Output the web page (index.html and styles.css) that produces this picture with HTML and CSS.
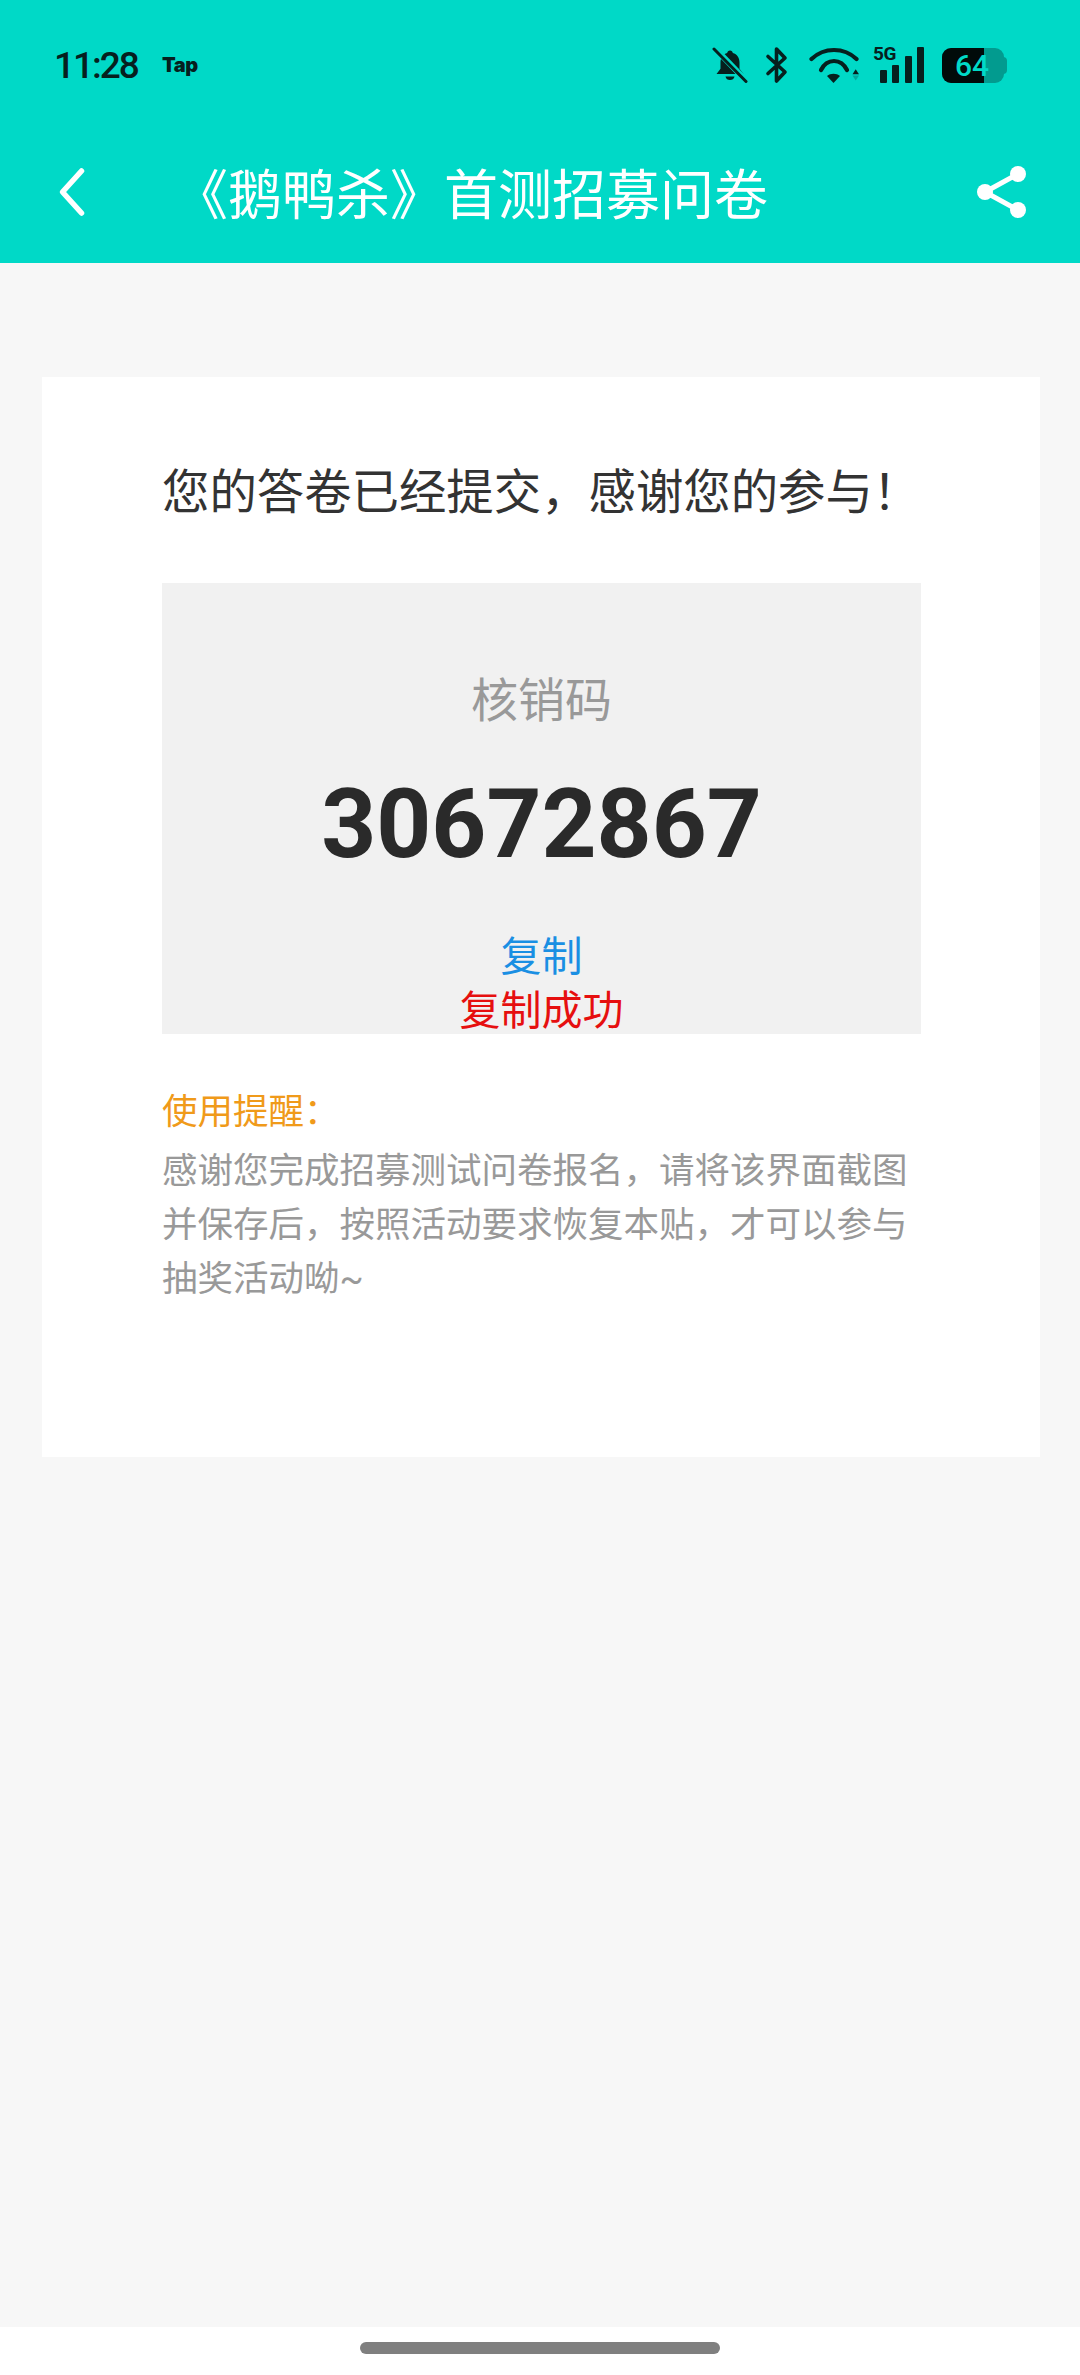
FILE: index.html
```html
<!DOCTYPE html>
<html lang="zh-CN">
<head>
    <meta charset="UTF-8">
    <meta name="viewport" content="width=device-width, initial-scale=1.0">
    <title>《鹅鸭杀》首测招募问卷</title>
    <link rel="stylesheet" href="styles.css">
</head>
<body>
    <div class="page">
        <header class="top">
            <div class="status-bar">
                <div class="status-left">
                    <span class="clock">11:28</span>
                    <span class="tap-logo">Tap</span>
                </div>
                <div class="status-right">
                    <!-- bell off -->
                    <svg class="ico-bell" viewBox="0 0 36 36" width="36" height="36">
                        <path d="M18 3.5c1.6 0 2.6 1 2.8 2.4 4.400 1.200 6.700 4.800 6.700 9.600v6.200l4 5.300H4.500l4-5.300v-6.200c0-4.800 2.600-8.400 6.700-9.600C15.400 4.500 16.400 3.500 18 3.500z" fill="#06201e"/>
                        <path d="M13.500 29.500h9c-.4 2.300-2.200 3.600-4.500 3.600s-4.100-1.300-4.500-3.600z" fill="#06201e"/>
                        <path d="M3 1.500 34.500 34" stroke="#00d9c7" stroke-width="6"/>
                        <path d="M2 2 34 34.500" stroke="#06201e" stroke-width="3" stroke-linecap="round"/>
                    </svg>
                    <!-- bluetooth -->
                    <svg class="ico-bt" viewBox="0 0 24 38" width="24" height="38">
                        <path d="M3 10.500 20 26 11.500 35V3L20 12 3 27.500" fill="none" stroke="#06201e" stroke-width="3.600" stroke-linejoin="round" stroke-linecap="round"/>
                    </svg>
                    <!-- wifi -->
                    <svg class="ico-wifi" viewBox="0 0 50 36" width="50" height="36">
                        <path d="M2.500 12C15 0 35 0 47.500 12" fill="none" stroke="#06201e" stroke-width="4.200" stroke-linecap="round"/>
                        <path d="M12 23C18 11 32 11 38 23" fill="none" stroke="#06201e" stroke-width="4.200" stroke-linecap="round"/>
                        <path d="M18 29c3.500-3 9.500-3 13 0l-6.500 7z" fill="#06201e"/>
                        <path d="M43.500 27.200l3.200-5 3.300 5z" fill="#06201e"/>
                        <path d="M43.500 28.500H50l-3.300 5z" fill="#06201e" opacity=".25"/>
                    </svg>
                    <!-- 5G signal -->
                    <div class="signal">
                        <span class="net-label">5G</span>
                        <span class="bar bar-1"></span>
                        <span class="bar bar-2"></span>
                        <span class="bar bar-3"></span>
                        <span class="bar bar-4"></span>
                    </div>
                    <!-- battery -->
                    <div class="battery">
                        <div class="battery-body">
                            <div class="battery-fill"></div>
                        </div>
                        <span class="battery-cap"></span>
                        <span class="battery-num">64</span>
                    </div>
                </div>
            </div>
            <div class="nav-bar">
                <svg class="ico-back" viewBox="0 0 30 52" width="30" height="52">
                    <path d="M24.500 5 5.500 26 24.500 47" fill="none" stroke="#fff" stroke-width="5.500" stroke-linecap="round" stroke-linejoin="round"/>
                </svg>
                <h1 class="nav-title">《鹅鸭杀》首测招募问卷</h1>
                <svg class="ico-share" viewBox="0 0 54 56" width="54" height="56">
                    <path d="M44 10 11 28 44 46" fill="none" stroke="#fff" stroke-width="5"/>
                    <circle cx="44" cy="10" r="8" fill="#fff"/>
                    <circle cx="11" cy="28" r="8" fill="#fff"/>
                    <circle cx="44" cy="46" r="8" fill="#fff"/>
                </svg>
            </div>
        </header>

        <main class="content">
            <section class="card">
                <p class="done-msg">您的答卷已经提交&#xFF0C;感谢您的参与&#xFF01;</p>
                <div class="code-box">
                    <div class="code-label">核销码</div>
                    <div class="code-num">30672867</div>
                    <div class="copy-link">复制</div>
                    <div class="copy-ok">复制成功</div>
                </div>
                <div class="tips">
                    <div class="tips-title">使用提醒&#xFF1A;</div>
                    <p class="tips-text">感谢您完成招募测试问卷报名&#xFF0C;请将该界面截图并保存后&#xFF0C;按照活动要求恢复本贴&#xFF0C;才可以参与抽奖活动呦~</p>
                </div>
            </section>
        </main>

        <footer class="home-area">
            <span class="home-pill"></span>
        </footer>
    </div>
</body>
</html>
```

FILE: styles.css
```css
* {
    box-sizing: border-box;
}
html, body {
    margin: 0;
    padding: 0;
}
body {
    font-family: Roboto, "Noto Sans CJK SC", sans-serif;
    background-color: #f7f7f7;
}
.page {
    width: 1080px;
    height: 2375px;
    display: flex;
    flex-direction: column;
    overflow: hidden;
}

/* top */
.top {
    height: 263px;
    background-color: #00d9c7;
    flex-shrink: 0;
}
.status-bar {
    height: 130px;
    padding: 45px 73px 0 54px;
    display: flex;
    justify-content: space-between;
    align-items: flex-start;
    color: #06201e;
}
.status-left {
    display: flex;
    align-items: center;
    height: 40px;
}
.clock {
    font-size: 37px;
    font-weight: 500;
    letter-spacing: -2px;
    width: 108px;
}
.tap-logo {
    font-family: Inter, sans-serif;
    font-size: 20px;
    font-weight: 900;
    letter-spacing: -0.5px;
}
.status-right {
    display: flex;
    align-items: center;
    height: 40px;
}
.ico-bt {
    margin-left: 17px;
}
.ico-wifi {
    margin-left: 20px;
}
.signal {
    position: relative;
    width: 52px;
    height: 36px;
    margin-left: 14px;
    padding-right: 1px;
    display: flex;
    align-items: flex-end;
    justify-content: flex-end;
    gap: 5.5px;
}
.net-label {
    position: absolute;
    left: 0;
    top: -3px;
    font-size: 19px;
    line-height: 20px;
    font-weight: 700;
    letter-spacing: -0.5px;
}
.bar {
    display: block;
    width: 7px;
    background-color: #06201e;
    border-radius: 1px;
}
.bar-1 {
    height: 13px;
}
.bar-2 {
    height: 18px;
}
.bar-3 {
    height: 27px;
}
.bar-4 {
    height: 36px;
}
.battery {
    position: relative;
    width: 65px;
    height: 35px;
    margin-left: 17px;
}
.battery-body {
    width: 62px;
    height: 35px;
    background-color: #029b8f;
    border-radius: 9px;
    overflow: hidden;
}
.battery-fill {
    width: 42px;
    height: 100%;
    background-color: #010b0a;
}
.battery-cap {
    position: absolute;
    right: 0;
    top: 9px;
    width: 4px;
    height: 17px;
    background-color: #029b8f;
    border-radius: 0 4px 4px 0;
}
.battery-num {
    position: absolute;
    left: 13px;
    top: 2px;
    font-size: 30px;
    line-height: 32px;
    font-weight: 500;
    color: #00d9c7;
}
.nav-bar {
    height: 133px;
    padding: 0 52px 10px 57px;
    display: flex;
    align-items: center;
    color: #fff;
}
.ico-back {
    flex-shrink: 0;
}
.nav-title {
    margin: 0 0 0 87px;
    flex: 1;
    font-size: 54px;
    font-weight: 400;
    white-space: nowrap;
}
.ico-share {
    flex-shrink: 0;
}

/* card */
.content {
    flex: 1;
    padding: 114px 40px 0 42px;
}
.card {
    height: 1080px;
    padding: 0 119px 0 120px;
    background-color: #fff;
}
.done-msg {
    margin: 0;
    padding-top: 80px;
    height: 206px;
    font-size: 47.4px;
    line-height: 72px;
    color: #333;
    white-space: nowrap;
}
.code-box {
    height: 451px;
    background-color: #f1f1f1;
    text-align: center;
}
.code-label {
    padding-top: 91px;
    font-size: 47px;
    line-height: 54px;
    color: #999;
}
.code-num {
    margin-top: 41px;
    font-size: 96px;
    font-weight: 700;
    line-height: 110px;
    color: #2a2a2a;
}
.copy-link {
    margin-top: 51px;
    font-size: 41px;
    line-height: 54px;
    color: #1a8fe3;
}
.copy-ok {
    font-size: 41px;
    line-height: 54px;
    color: #e60f0f;
}
.tips {
    margin-top: 51px;
}
.tips-title {
    font-size: 35.5px;
    line-height: 54px;
    color: #f09a1a;
}
.tips-text {
    margin: 5px 0 0;
    font-size: 35.5px;
    line-height: 54px;
    color: #999;
}

/* bottom */
.home-area {
    height: 48px;
    flex-shrink: 0;
    background-color: #fff;
    display: flex;
    justify-content: center;
    padding-top: 15px;
}
.home-pill {
    width: 360px;
    height: 12px;
    border-radius: 6px;
    background-color: #7f7f7f;
}
```
